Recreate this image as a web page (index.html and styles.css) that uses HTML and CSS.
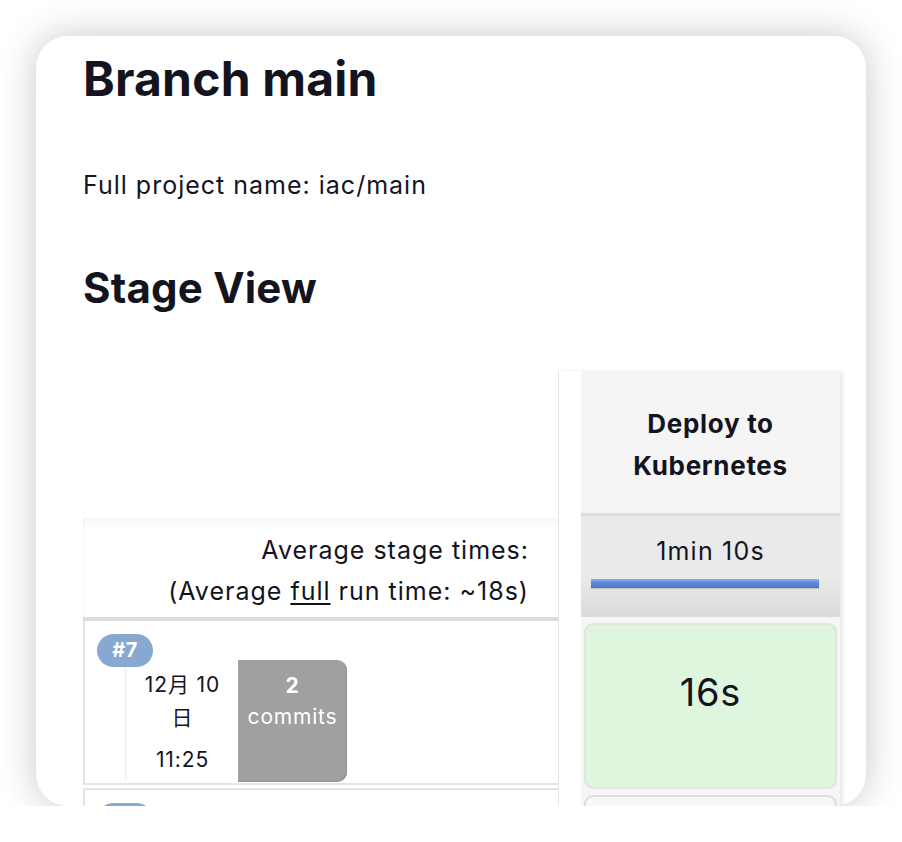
FILE: index.html
```html
<!DOCTYPE html>
<html lang="en">
<head>
<meta charset="utf-8">
<title>Branch main</title>
<link rel="stylesheet" href="styles.css">
</head>
<body>
<div class="card">
  <h1 class="title">Branch main</h1>
  <p class="project">Full project name: iac/main</p>
  <h2 class="subtitle">Stage View</h2>
  <div class="stage-view">
    <div class="labels">
      <div class="lhead"></div>
      <div class="lavg">
        <div>Average stage times:</div>
        <div>(Average <u>full</u> run time: ~18s)</div>
      </div>
      <div class="lrow">
        <span class="badge">#7</span>
        <div class="build">
          <div class="when">
            <div class="date">12月 10日</div>
            <div class="time">11:25</div>
          </div>
          <div class="commits">
            <div class="count">2</div>
            <div>commits</div>
          </div>
        </div>
      </div>
      <div class="lrow next">
        <span class="badge"></span>
      </div>
    </div>
    <div class="stage">
      <div class="shead">Deploy to<br>Kubernetes</div>
      <div class="savg">
        <div class="avgtime">1min 10s</div>
        <div class="bar"></div>
      </div>
      <div class="scell-wrap">
        <div class="scell ok">16s</div>
      </div>
      <div class="scell-wrap">
        <div class="scell plain"></div>
      </div>
    </div>
  </div>
</div>
</body>
</html>
```
FILE: styles.css
```css
html, body {
  margin: 0;
  padding: 0;
  background: #ffffff;
}
body {
  font-family: "Inter", "Noto Sans CJK JP", sans-serif;
  color: #14141f;
}
.card {
  box-sizing: border-box;
  margin: 36px 0 0 36px;
  width: 830px;
  height: 770px;
  border-radius: 32px;
  background: #ffffff;
  box-shadow: 0 0 38px rgba(0, 0, 0, 0.22);
  overflow: hidden;
  padding: 14px 0 0 47px;
}
.title {
  margin: 0;
  font-size: 48px;
  line-height: 58px;
  font-weight: 700;
  letter-spacing: 0.2px;
}
.project {
  margin: 62px 0 0;
  font-size: 25px;
  line-height: 30px;
  letter-spacing: 1px;
}
.subtitle {
  margin: 62px 0 0;
  font-size: 42px;
  line-height: 52px;
  font-weight: 700;
  letter-spacing: 0.2px;
}
.stage-view {
  display: flex;
  margin-top: 57px;
}
.labels {
  width: 475px;
  flex: none;
}
.lhead {
  height: 147px;
}
.lavg {
  box-sizing: border-box;
  height: 103px;
  padding: 12px 29px 0 0;
  text-align: right;
  font-size: 25px;
  line-height: 41px;
  letter-spacing: 1px;
  border-bottom: 4px solid #dcdcdc;
  background: linear-gradient(#f7f7f7, #ffffff 14px);
  box-shadow: inset 2px 0 3px -2px rgba(0,0,0,0.08);
}
.lavg u {
  text-decoration-thickness: 2px;
  text-underline-offset: 3px;
}
.lrow {
  position: relative;
  box-sizing: border-box;
  height: 164px;
  border-left: 2px solid #e4e4e4;
  border-bottom: 2px solid #e4e4e4;
  margin-bottom: 3px;
}
.lrow.next {
  border-top: 2px solid #e4e4e4;
}
.badge {
  position: absolute;
  left: 12px;
  top: 13px;
  z-index: 2;
  width: 56px;
  height: 33px;
  border-radius: 17px;
  background: #87a9d1;
  color: #ffffff;
  font-weight: 700;
  font-size: 20px;
  line-height: 33px;
  text-align: center;
  letter-spacing: 0.5px;
}
.build {
  display: flex;
  padding: 39px 0 0 42px;
}
.when {
  box-sizing: border-box;
  width: 111px;
  height: 122px;
  padding: 8px 10px 0;
  background: #ffffff;
  box-shadow: -3px 0 4px -2px rgba(0,0,0,0.1);
  text-align: center;
  font-size: 21px;
  line-height: 33px;
  letter-spacing: 0.9px;
}
.time {
  margin-top: 9px;
}
.commits {
  box-sizing: border-box;
  width: 109px;
  height: 122px;
  padding-top: 10px;
  border-radius: 0 10px 10px 0;
  background: #a0a0a0;
  box-shadow: inset -1px -1px 0 #939393;
  color: #ffffff;
  text-align: center;
  font-size: 21px;
  line-height: 31px;
  letter-spacing: 0.8px;
}
.count {
  font-weight: 700;
}
.stage {
  width: 282px;
  flex: none;
  padding-left: 22px;
  box-sizing: border-box;
  border-left: 1px solid #e6e6e6;
  box-shadow: 3px 0 4px rgba(0,0,0,0.08);
  background: #ffffff;
  margin-right: 6px;
}
.shead {
  box-sizing: border-box;
  height: 142px;
  padding-top: 32px;
  background: #f5f5f6;
  text-align: center;
  font-weight: 700;
  font-size: 26px;
  line-height: 42px;
  letter-spacing: 0.7px;
}
.savg {
  box-sizing: border-box;
  height: 104px;
  border-top: 3px solid #dcdcdc;
  background: linear-gradient(#eaeaeb 60%, #dadadb);
  padding: 20px 20px 0 10px;
}
.avgtime {
  text-align: center;
  font-size: 25px;
  line-height: 30px;
  letter-spacing: 1.2px;
  padding-left: 10px;
}
.bar {
  margin-top: 13px;
  width: 228px;
  height: 9px;
  background: linear-gradient(#8fb2ea, #5b8bd8 40%, #4a78c6);
  box-shadow: 0 1px 1px rgba(0,0,0,0.15);
}
.scell-wrap {
  padding: 6px 3px 0;
  background: #f6f6f6;
}
.scell {
  box-sizing: border-box;
  height: 166px;
  border-radius: 9px;
  border: 2px solid #dfe6de;
  text-align: center;
  font-size: 38px;
  line-height: 44px;
  letter-spacing: 0.8px;
  padding-top: 45px;
}
.scell.ok {
  background: #dff6de;
}
.scell.plain {
  background: #f7f7f7;
  border-color: #dddddd;
}
```
